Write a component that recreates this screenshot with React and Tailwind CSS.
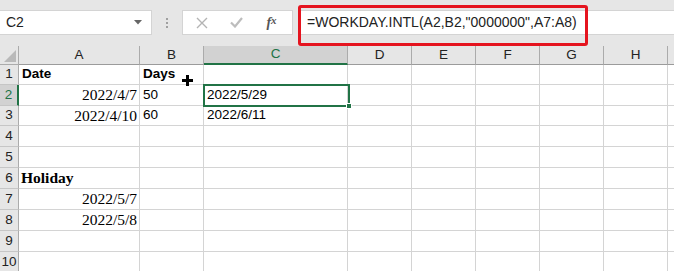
import React from 'react';

const cols = [
  { key: 'A', w: 121 },
  { key: 'B', w: 64 },
  { key: 'C', w: 144 },
  { key: 'D', w: 64 },
  { key: 'E', w: 64 },
  { key: 'F', w: 64 },
  { key: 'G', w: 64 },
  { key: 'H', w: 64 },
  { key: 'I', w: 64, hidden: true },
];

const rowHeights = [20, 21, 20, 21, 21, 21, 21, 21, 21, 21];

const sans = "font-['Liberation_Sans',Arial,sans-serif]";
const serif = "font-['Liberation_Serif','Times_New_Roman',serif]";

// cell contents keyed by row/column
const cells = {
  '1A': { text: 'Date', cls: `${sans} font-bold text-[13.5px] pl-[3px]` },
  '1B': { text: 'Days', cls: `${sans} font-bold text-[13.5px] pl-[3px]` },
  '2A': { text: '2022/4/7', cls: `${serif} text-[15.5px] justify-end pr-[2px]` },
  '2B': { text: '50', cls: `${sans} text-[13.5px] pl-[3px]` },
  '2C': { text: '2022/5/29', cls: `${sans} text-[13.5px] pl-[3px]` },
  '3A': { text: '2022/4/10', cls: `${serif} text-[15.5px] justify-end pr-[2px]` },
  '3B': { text: '60', cls: `${sans} text-[13.5px] pl-[3px]` },
  '3C': { text: '2022/6/11', cls: `${sans} text-[13.5px] pl-[3px]` },
  '6A': { text: 'Holiday', cls: `${serif} font-bold text-[15.5px] pl-[2px]` },
  '7A': { text: '2022/5/7', cls: `${serif} text-[15.5px] justify-end pr-[2px]` },
  '8A': { text: '2022/5/8', cls: `${serif} text-[15.5px] justify-end pr-[2px]` },
};

const Toolbar = () => (
  <div className="relative h-[46px] bg-[#e6e6e6] flex items-start pt-[10px]">
    {/* name box */}
    <div className={`w-[152px] h-[25px] bg-white border border-[#d4d4d4] border-l-0 flex items-center justify-between pl-[6px] pr-[9px] ${sans} text-[14px] text-[#222]`}>
      <span>C2</span>
      <svg width="8" height="5" viewBox="0 0 8 5"><path d="M0 0h8L4 4.5z" fill="#666" /></svg>
    </div>
    {/* grip dots */}
    <div className="w-[30px] h-[25px] flex flex-col items-center justify-center gap-[2px]">
      <span className="w-[2px] h-[2px] bg-[#a0a0a0]" />
      <span className="w-[2px] h-[2px] bg-[#a0a0a0]" />
      <span className="w-[2px] h-[2px] bg-[#a0a0a0]" />
    </div>
    {/* buttons */}
    <div className="w-[111px] h-[25px] bg-white border border-[#d4d4d4] flex items-center">
      <div className="w-[38px] flex justify-center">
        <svg width="12" height="12" viewBox="0 0 12 12"><path d="M1 1l10 10M11 1L1 11" stroke="#b4b4b4" strokeWidth="1.4" /></svg>
      </div>
      <div className="w-[30px] flex justify-center">
        <svg width="13" height="11" viewBox="0 0 13 11"><path d="M1 5.5l4 4L12 1" stroke="#bdbdbd" strokeWidth="2.2" fill="none" /></svg>
      </div>
      <div className={`flex-1 flex justify-center ${serif} italic text-[14px] text-[#555] font-bold`}>
        f<span className="text-[11px]">x</span>
      </div>
    </div>
    {/* formula bar */}
    <div className={`ml-[5px] flex-1 h-[25px] bg-white border-y border-[#d4d4d4] flex items-center pl-[9px] ${sans} text-[14px] text-[#222]`}>
      =WORKDAY.INTL(A2,B2,"0000000",A7:A8)
    </div>
    {/* red highlight annotation */}
    <div className="absolute left-[298px] top-[5px] w-[290px] h-[41px] border-[3px] border-[#e5141f] rounded-[3px] pointer-events-none" />
  </div>
);

const Grid = () => (
  <div className="relative">
    {/* column headers */}
    <div className="flex h-[19px]">
      <div className="w-[19px] shrink-0 bg-[#e6e6e6] border-r border-b border-[#ababab] relative overflow-hidden">
        <svg className="absolute right-[2px] bottom-[2px]" width="12" height="12" viewBox="0 0 12 12"><path d="M12 0v12H0z" fill="#b9b9b9" /></svg>
      </div>
      {cols.map((c) => (
        <div
          key={c.key}
          style={{ width: c.w }}
          className={`shrink-0 flex items-center justify-center border-r border-[#ababab] ${sans} text-[13.5px] ${
            c.key === 'C'
              ? 'bg-[#d2d2d2] border-b-2 border-b-[#217346] text-[#217346]'
              : 'bg-[#e6e6e6] border-b border-b-[#9b9b9b] text-[#222]'
          }`}
        >
          {c.hidden ? null : c.key}
        </div>
      ))}
    </div>
    {rowHeights.map((h, i) => {
      const r = i + 1;
      return (
        <div key={r} className="flex" style={{ height: h }}>
          <div
            className={`w-[19px] shrink-0 flex items-center justify-center border-b border-[#c6c6c6] ${sans} text-[13.5px] ${
              r === 2
                ? 'bg-[#d2d2d2] text-[#217346] border-r-2 border-r-[#217346]'
                : 'bg-[#e6e6e6] text-[#222] border-r border-r-[#ababab]'
            }`}
          >
            {r}
          </div>
          {cols.map((c) => {
            const cell = cells[`${r}${c.key}`];
            return (
              <div
                key={c.key}
                style={{ width: c.w }}
                className={`shrink-0 flex items-center whitespace-nowrap overflow-visible text-black bg-white border-r border-b border-[#d4d4d4] ${cell ? cell.cls : ''}`}
              >
                {cell ? cell.text : null}
              </div>
            );
          })}
        </div>
      );
    })}
    {/* active cell C2 */}
    <div className="absolute left-[203px] top-[38px] w-[147px] h-[23px] border-2 border-[#217346] pointer-events-none" />
    <div className="absolute left-[346px] top-[57px] w-[6px] h-[6px] bg-[#217346] border border-white pointer-events-none" />
    {/* mouse cursor */}
    <svg className="absolute left-[182px] top-[29px]" width="11" height="11" viewBox="0 0 11 11">
      <path d="M4 0h3v4h4v3H7v4H4V7H0V4h4z" fill="#000" />
    </svg>
  </div>
);

export default function App() {
  return (
    <div className="w-[674px] h-[271px] overflow-hidden bg-white">
      <Toolbar />
      <Grid />
    </div>
  );
}
